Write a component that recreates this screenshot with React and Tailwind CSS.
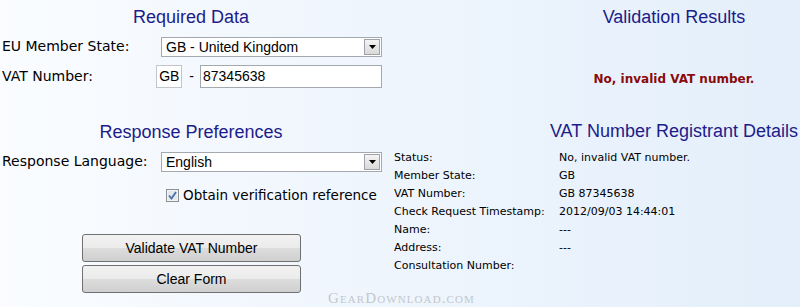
import React from "react";

const sansV = "font-['DejaVu_Sans',Verdana,sans-serif]";
const sansA = "font-['Liberation_Sans',Arial,sans-serif]";

function Select({ value }) {
  return (
    <div className="relative flex h-[20px] w-[221px] items-center border border-[#a4a9b0] bg-white">
      <span className={`${sansA} pl-[4px] text-[14px] leading-none text-black`}>{value}</span>
      <div className="absolute right-[1px] top-[1px] flex h-[16px] w-[16px] items-center justify-center border border-[#9ea3aa] bg-gradient-to-b from-[#f4f4f4] to-[#d9d9d9]">
        <svg width="7" height="4" viewBox="0 0 7 4">
          <path d="M0 0h7L3.5 4z" fill="#000" />
        </svg>
      </div>
    </div>
  );
}

function Button({ children }) {
  return (
    <div
      className={`${sansA} flex h-[28px] w-[219px] items-center justify-center rounded-[3px] border border-[#707070] bg-[linear-gradient(to_bottom,#f2f2f2_0%,#ebebeb_50%,#dddddd_51%,#cfcfcf_100%)] text-[14px] text-black`}
    >
      {children}
    </div>
  );
}

function Heading({ children, className = "" }) {
  return (
    <div className={`${sansA} text-center text-[18px] leading-[22px] text-[#1c1c8a] ${className}`}>{children}</div>
  );
}

const rows = [
  ["Status:", "No, invalid VAT number."],
  ["Member State:", "GB"],
  ["VAT Number:", "GB 87345638"],
  ["Check Request Timestamp:", "2012/09/03 14:44:01"],
  ["Name:", "---"],
  ["Address:", "---"],
  ["Consultation Number:", ""],
];

export default function App() {
  return (
    <div className="relative flex h-[307px] w-[800px] overflow-hidden bg-[linear-gradient(to_right,#fafcff_0%,#eef5fd_50%,#e4effb_100%)]">
      {/* Left column */}
      <div className="flex w-[382px] flex-col">
        <Heading className="mt-[6px]">Required Data</Heading>
        <div className="mt-[8px] flex items-center">
          <div className={`${sansV} w-[161px] pl-[2px] text-[14px] text-black`}>EU Member State:</div>
          <Select value="GB - United Kingdom" />
        </div>
        <div className="mt-[8px] flex items-center">
          <div className={`${sansV} w-[161px] pl-[2px] text-[14px] text-black`}>VAT Number:</div>
          <div className={`${sansA} flex items-center text-[14px]`}>
            <div className="flex h-[23px] w-[26px] items-center justify-center border border-[#c2c6cc] bg-white">GB</div>
            <span className="ml-[7px] mr-[6px]">-</span>
            <div className="flex h-[23px] w-[182px] items-center border border-[#a4a9b0] bg-white pl-[2px]">87345638</div>
          </div>
        </div>
        <Heading className="mt-[33px]">Response Preferences</Heading>
        <div className="mt-[8px] flex items-center">
          <div className={`${sansV} w-[161px] pl-[2px] text-[14px] text-black`}>Response Language:</div>
          <Select value="English" />
        </div>
        <div className="mt-[14px] flex h-[18px] items-center pl-[166px]">
          <svg width="13" height="13" viewBox="0 0 13 13" className="shrink-0">
            <rect x="0.5" y="0.5" width="12" height="12" fill="#f4f4f4" stroke="#8e8f8f" />
            <rect x="2" y="2" width="9" height="9" fill="#e3e7ee" />
            <path d="M3 6.5l2.5 3L10 3" fill="none" stroke="#4a6fa5" strokeWidth="1.8" />
          </svg>
          <span className={`${sansV} ml-[4px] whitespace-nowrap text-[13.5px] leading-[18px] text-black`}>
            Obtain verification reference
          </span>
        </div>
        <div className="mt-[30px] flex flex-col gap-[3px] pl-[82px]">
          <Button>Validate VAT Number</Button>
          <Button>Clear Form</Button>
        </div>
      </div>

      {/* Right column */}
      <div className="ml-[12px] flex flex-1 flex-col">
        <Heading className="mt-[6px] pl-[154px]">Validation Results</Heading>
        <div className={`${sansV} mt-[42px] pl-[154px] text-center text-[12px] font-bold text-[#8b0a0a]`}>
          No, invalid VAT number.
        </div>
        <Heading className="mt-[32px] pl-[154px]">VAT Number Registrant Details</Heading>
        <div className={`${sansV} mt-[7px] flex flex-col text-[11px] leading-[18px] text-black`}>
          {rows.map(([k, v]) => (
            <div key={k} className="flex">
              <div className="w-[165px]">{k}</div>
              <div>{v}</div>
            </div>
          ))}
        </div>
      </div>

      <div className="absolute left-[328px] top-[287px] font-['Liberation_Serif','Times_New_Roman',serif] text-[15px] tracking-[1.1px] text-[#c3c7cc] [font-variant:small-caps]">
        GearDownload.com
      </div>
    </div>
  );
}
